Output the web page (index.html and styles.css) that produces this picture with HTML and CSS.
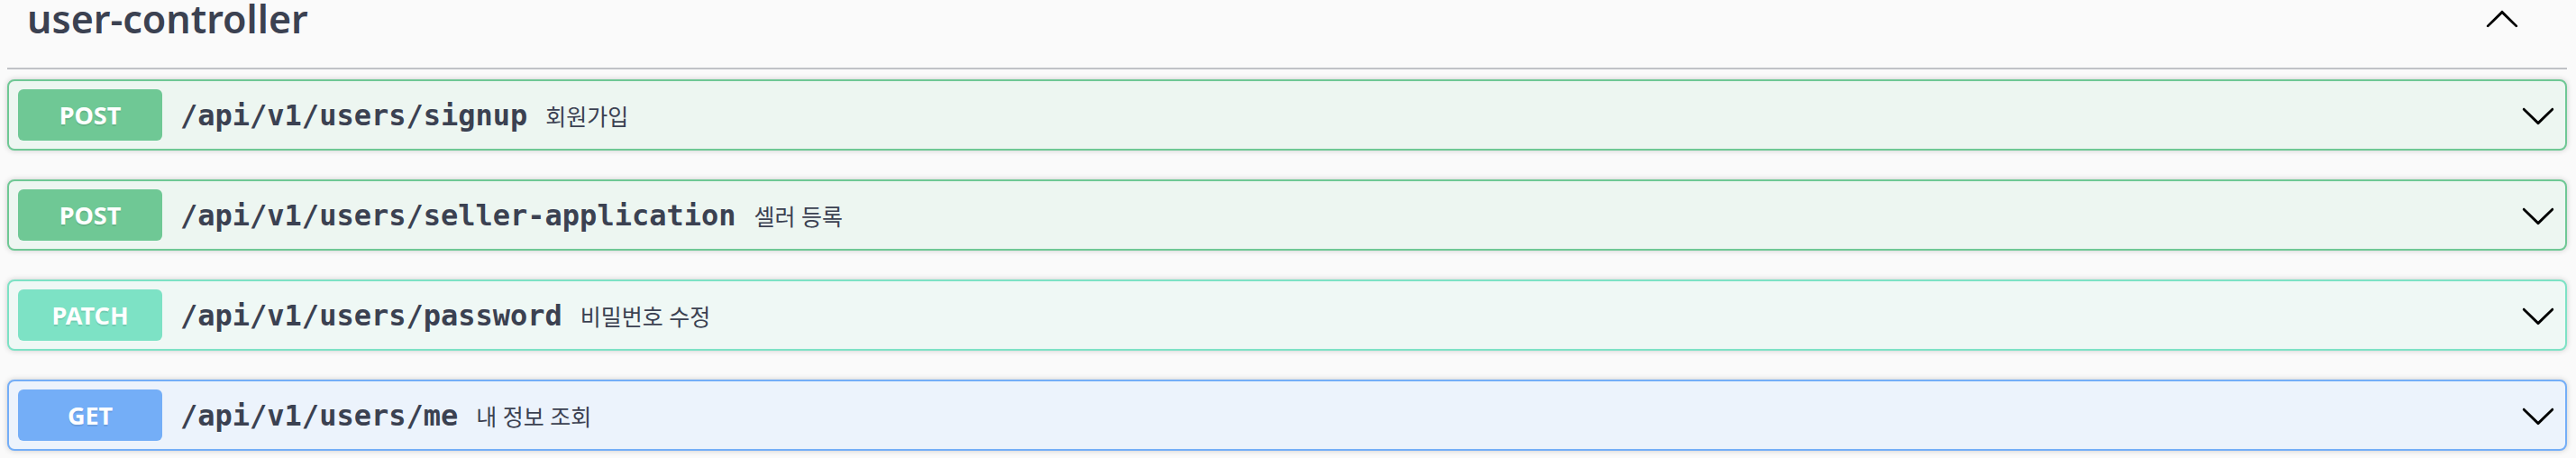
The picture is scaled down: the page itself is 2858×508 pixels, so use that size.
FILE: index.html
```html
<!DOCTYPE html>
<html lang="ko">
<head>
<meta charset="utf-8">
<title>user-controller</title>
<link rel="stylesheet" href="styles.css">
</head>
<body>
<div class="wrap">
  <div class="tag">
    <h3 class="tag-title">user-controller</h3>
    <button class="tag-toggle" aria-label="collapse">
      <svg width="40" height="40" viewBox="0 0 20 20"><path d="M17.418 14.908c.272.268.709.268.979 0s.271-.701 0-.969l-7.908-7.83c-.27-.268-.707-.268-.979 0l-7.908 7.83c-.27.268-.27.701 0 .969.271.268.709.268.979 0L10 7.767l7.418 7.141z"/></svg>
    </button>
  </div>

  <div class="op op-post">
    <span class="method">POST</span>
    <span class="path">/api/v1/users/signup</span>
    <span class="desc">회원가입</span>
    <span class="arrow"><svg width="40" height="40" viewBox="0 0 20 20"><path d="M17.418 6.109c.272-.268.709-.268.979 0s.271.701 0 .969l-7.908 7.83c-.27.268-.707.268-.979 0l-7.908-7.83c-.27-.268-.27-.701 0-.969.271-.268.709-.268.979 0L10 13.25l7.418-7.141z"/></svg></span>
  </div>

  <div class="op op-post">
    <span class="method">POST</span>
    <span class="path">/api/v1/users/seller-application</span>
    <span class="desc">셀러 등록</span>
    <span class="arrow"><svg width="40" height="40" viewBox="0 0 20 20"><path d="M17.418 6.109c.272-.268.709-.268.979 0s.271.701 0 .969l-7.908 7.83c-.27.268-.707.268-.979 0l-7.908-7.83c-.27-.268-.27-.701 0-.969.271-.268.709-.268.979 0L10 13.25l7.418-7.141z"/></svg></span>
  </div>

  <div class="op op-patch">
    <span class="method">PATCH</span>
    <span class="path">/api/v1/users/password</span>
    <span class="desc">비밀번호 수정</span>
    <span class="arrow"><svg width="40" height="40" viewBox="0 0 20 20"><path d="M17.418 6.109c.272-.268.709-.268.979 0s.271.701 0 .969l-7.908 7.83c-.27.268-.707.268-.979 0l-7.908-7.83c-.27-.268-.27-.701 0-.969.271-.268.709-.268.979 0L10 13.25l7.418-7.141z"/></svg></span>
  </div>

  <div class="op op-get">
    <span class="method">GET</span>
    <span class="path">/api/v1/users/me</span>
    <span class="desc">내 정보 조회</span>
    <span class="arrow"><svg width="40" height="40" viewBox="0 0 20 20"><path d="M17.418 6.109c.272-.268.709-.268.979 0s.271.701 0 .969l-7.908 7.83c-.27.268-.707.268-.979 0l-7.908-7.83c-.27-.268-.27-.701 0-.969.271-.268.709-.268.979 0L10 13.25l7.418-7.141z"/></svg></span>
  </div>
</div>
</body>
</html>
```

FILE: styles.css
```css
html, body {
  margin: 0;
  padding: 0;
  background: #fafafa;
}

.wrap {
  padding: 0 10px 0 8px;
  color: #3b4151;
}

.tag {
  display: flex;
  align-items: flex-start;
  height: 75px;
  border-bottom: 2px solid rgba(59, 65, 81, 0.3);
  margin-bottom: 11px;
}

.tag-title {
  margin: 0;
  padding-left: 22px;
  font-family: "Noto Sans", "Open Sans", sans-serif;
  font-weight: 600;
  font-size: 43px;
  line-height: 41px;
  color: #3b4151;
}

.tag-toggle {
  margin-left: auto;
  margin-right: 52px;
  padding: 0;
  border: 0;
  background: none;
  width: 40px;
  height: 40px;
}

.tag-toggle svg,
.arrow svg {
  display: block;
  fill: #000;
}

.op {
  display: flex;
  align-items: center;
  height: 79px;
  box-sizing: border-box;
  padding: 0 10px;
  border: 2px solid;
  border-radius: 8px;
  margin-bottom: 32px;
  box-shadow: 0 0 6px rgba(0, 0, 0, 0.19);
}

.method {
  display: flex;
  align-items: center;
  justify-content: center;
  flex: none;
  width: 160px;
  height: 57px;
  border-radius: 6px;
  color: #fff;
  font-family: "Noto Sans", "Open Sans", sans-serif;
  font-weight: 700;
  font-size: 27px;
  text-shadow: 0 2px 0 rgba(0, 0, 0, 0.1);
}

.path {
  padding: 0 20px;
  font-family: "DejaVu Sans Mono", "Liberation Mono", monospace;
  font-weight: 700;
  font-size: 32px;
  color: #3b4151;
}

.desc {
  font-family: "Noto Sans", "Noto Sans CJK KR", sans-serif;
  font-size: 25px;
  color: #3b4151;
}

.arrow {
  margin-left: auto;
  width: 40px;
  height: 40px;
}

.op-post {
  border-color: #6fc895;
  background: #edf6f1;
}
.op-post .method { background: #6fc895; }

.op-patch {
  border-color: #7de2c5;
  background: #eff8f5;
}
.op-patch .method { background: #7de2c5; }

.op-get {
  border-color: #74aef7;
  background: #ecf3fc;
}
.op-get .method { background: #74aef7; }
```
